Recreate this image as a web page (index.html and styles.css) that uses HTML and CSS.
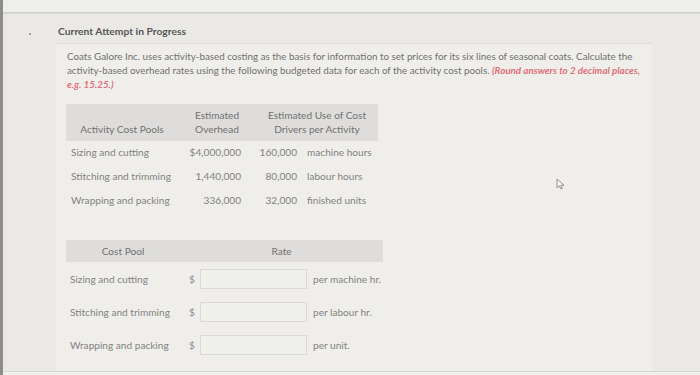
FILE: index.html
```html
<!DOCTYPE html>
<html>
<head>
<meta charset="utf-8">
<link rel="stylesheet" href="styles.css">
</head>
<body>
<div class="screen">
  <div class="topbar"></div>
  <div class="page">
    <div class="gutter"><span class="dot"></span></div>
    <div class="content">
      <h1 class="title">Current Attempt in Progress</h1>
      <div class="panel">
        <p class="intro"><span>Coats Galore Inc. uses activity-based costing as the basis for information to set prices for its six lines of seasonal coats. Calculate the</span> <span>activity-based overhead rates using the following budgeted data for each of the activity cost pools.</span> <span class="hint">(Round answers to 2 decimal places,</span> <span class="hint">e.g. 15.25.)</span></p>

        <table class="data">
          <colgroup><col class="c1"><col class="c2"><col class="c3"><col class="c4"></colgroup>
          <thead>
            <tr>
              <th>Activity Cost Pools</th>
              <th>Estimated<br>Overhead</th>
              <th colspan="2">Estimated Use of Cost<br>Drivers per Activity</th>
            </tr>
          </thead>
          <tbody>
            <tr><td class="lbl">Sizing and cutting</td><td class="num">$4,000,000</td><td class="qty">160,000</td><td class="unit">machine hours</td></tr>
            <tr><td class="lbl">Stitching and trimming</td><td class="num">1,440,000</td><td class="qty">80,000</td><td class="unit">labour hours</td></tr>
            <tr><td class="lbl">Wrapping and packing</td><td class="num">336,000</td><td class="qty">32,000</td><td class="unit">finished units</td></tr>
          </tbody>
        </table>

        <table class="rates">
          <colgroup><col class="r1"><col class="r2"><col class="r3"><col class="r4"></colgroup>
          <thead>
            <tr><th>Cost Pool</th><th colspan="3">Rate</th></tr>
          </thead>
          <tbody>
            <tr><td class="lbl">Sizing and cutting</td><td class="cur">$</td><td><div class="box"></div></td><td class="unit">per machine hr.</td></tr>
            <tr><td class="lbl">Stitching and trimming</td><td class="cur">$</td><td><div class="box"></div></td><td class="unit">per labour hr.</td></tr>
            <tr><td class="lbl">Wrapping and packing</td><td class="cur">$</td><td><div class="box"></div></td><td class="unit">per unit.</td></tr>
          </tbody>
        </table>
      </div>
    </div>
  </div>
  <div class="bottombar"></div>
  <svg class="cursor" width="9" height="12" viewBox="0 0 9 12"><path d="M1 1 L1 10 L3.4 7.8 L5 11 L6.4 10.3 L4.9 7.2 L8 7.2 Z" fill="#f4f4f2" stroke="#8a8a88" stroke-width="0.9" stroke-linejoin="round"/></svg>
</div>
</body>
</html>
```
FILE: styles.css
```css
html, body {
  margin: 0;
  padding: 0;
}
body {
  background: #e9e8e5;
  font-family: Lato, "Open Sans", sans-serif;
}
.screen {
  position: relative;
  width: 700px;
  height: 375px;
  box-sizing: border-box;
  border-left: 3px solid #8e8d8b;
  background: #eae9e6;
  display: flex;
  flex-direction: column;
  overflow: hidden;
}
.topbar {
  height: 12px;
  flex: none;
  background: #eeeeec;
  border-bottom: 1px solid #cfcecb;
  box-shadow: 0 1px 1px #dcdbd8;
}
.page {
  flex: 1;
  display: flex;
  min-height: 0;
}
.gutter {
  width: 55px;
  flex: none;
}
.dot {
  display: block;
  width: 2px;
  height: 2px;
  border-radius: 1px;
  background: #8a8a8a;
  margin: 20px 0 0 26px;
}
.content {
  flex: 1;
  display: flex;
  flex-direction: column;
  min-height: 0;
}
.title {
  margin: 11px 0 0 0;
  font-size: 10.3px;
  line-height: 14px;
  font-weight: 700;
  color: #575757;
}
.panel {
  flex: 1;
  margin: 5px 0 0 -2px;
  width: 596px;
  box-sizing: border-box;
  background: #efeeeb;
  border-top: 1px solid #dedddb;
  padding: 5px 0 0 10px;
}
.intro {
  margin: 0 0 13px 1px;
  width: 578px;
  font-size: 9.8px;
  line-height: 14px;
  color: #707070;
}
.hint {
  color: #e0707b;
  font-weight: 700;
  font-style: italic;
}
table {
  border-collapse: collapse;
  font-size: 10.1px;
  color: #828282;
}
th {
  background: #dedddb;
  font-weight: 400;
  color: #717171;
  padding: 0;
}
td {
  padding: 0;
}
.data {
  width: 312px;
}
.data .c1 { width: 112px; }
.data .c2 { width: 78px; }
.data .c3 { width: 44px; }
.data .c4 { width: 78px; }
.data th {
  height: 37px;
  box-sizing: border-box;
  vertical-align: bottom;
  line-height: 14px;
  padding-bottom: 5px;
  text-align: center;
}
.data td {
  height: 24px;
  box-sizing: border-box;
  line-height: 14px;
  padding-top: 4px;
  vertical-align: top;
  white-space: nowrap;
}
.data .lbl { padding-left: 5px; }
.data .num { text-align: right; padding-right: 15px; }
.data .qty { text-align: right; padding-right: 3px; }
.data .unit { padding-left: 7px; }

.rates {
  margin-top: 27px;
  width: 317px;
}
.rates .r1 { width: 114px; }
.rates .r2 { width: 20px; }
.rates .r3 { width: 109px; }
.rates .r4 { width: 74px; }
.rates th {
  height: 22px;
  line-height: 22px;
  text-align: center;
}
.rates td {
  height: 33px;
  box-sizing: border-box;
  padding-top: 7px;
  vertical-align: top;
  line-height: 20px;
  white-space: nowrap;
}
.rates .lbl { padding-left: 4px; }
.rates .cur { padding-left: 9px; color: #8a8a8a; }
.rates .unit { padding-left: 4px; }
.box {
  width: 107px;
  height: 20px;
  box-sizing: border-box;
  border: 1px solid #dad9d6;
  background: #efefec;
}
.bottombar {
  flex: none;
  height: 3px;
  border-top: 1px solid #d6d5d2;
  background: #f0f0ee;
}
.cursor {
  position: absolute;
  left: 553px;
  top: 178px;
}
```
